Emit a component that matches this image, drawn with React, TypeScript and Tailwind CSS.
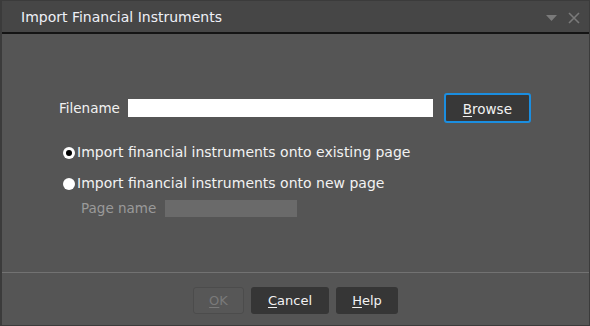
import React from "react";

const font = { fontFamily: '"DejaVu Sans", Verdana, sans-serif' };

function Radio({ checked }: { checked?: boolean }) {
  return (
    <span className="flex h-[12px] w-[12px] items-center justify-center rounded-full bg-white">
      {checked && <span className="h-[6px] w-[6px] rounded-full bg-black" />}
    </span>
  );
}

export default function App() {
  return (
    <div
      className="flex h-[326px] w-[590px] flex-col border border-l-2 border-[#3b3b3b] bg-[#555555] text-[13px]"
      style={font}
    >
      {/* title bar */}
      <div className="flex h-[33px] shrink-0 items-center justify-between border-b-2 border-[#141414] bg-[#464646] pb-[1px] pl-[19px] pr-[9px] pt-[3px]">
        <span className="text-[14px] text-[#eef0f6]">Import Financial Instruments</span>
        <div className="flex items-center gap-[11px]">
          <svg width="11" height="6" viewBox="0 0 11 6">
            <path d="M0 0 L11 0 L5.5 6 Z" fill="#7a7a7a" />
          </svg>
          <svg width="12" height="12" viewBox="0 0 12 12">
            <path d="M1 1 L11 11 M11 1 L1 11" stroke="#7a7a7a" strokeWidth="1.6" />
          </svg>
        </div>
      </div>

      {/* body */}
      <div className="flex flex-1 flex-col pl-[57px] pt-[59px]">
        <div className="flex items-center">
          <span className="text-[13.5px] text-[#f2f2f2]">Filename</span>
          <div className="ml-[8px] h-[18px] w-[305px] bg-white" />
          <button className="ml-[11px] h-[30px] w-[87px] rounded-[3px] border-2 border-[#1b8ee0] bg-[#383838] pt-[2px] text-[13.5px] text-[#f2f2f2]">
            <span className="underline underline-offset-2">B</span>rowse
          </button>
        </div>

        <div className="mt-[19px] flex items-center gap-[2px] pl-[4px] text-[14px]">
          <Radio checked />
          <span className="text-[#f2f2f2]">Import financial instruments onto existing page</span>
        </div>
        <div className="mt-[10px] flex items-center gap-[2px] pl-[4px] text-[14px]">
          <Radio />
          <span className="text-[#f2f2f2]">Import financial instruments onto new page</span>
        </div>
        <div className="mt-[4px] flex items-center pl-[22px]">
          <span className="text-[13.5px] text-[#9a9a9a]">Page name</span>
          <div className="ml-[9px] h-[17px] w-[132px] bg-[#6a6a6a]" />
        </div>
      </div>

      {/* footer */}
      <div className="flex h-[53px] shrink-0 items-center justify-center gap-[7px] border-t border-[#727272] pt-[2px]">
        <button className="h-[27px] w-[51px] rounded-[3px] border border-[#4c4c4c] bg-[#575757] pt-[2px] text-[#7a7a7a]">
          <span className="underline underline-offset-2">O</span>K
        </button>
        <button className="h-[27px] w-[78px] rounded-[3px] bg-[#363636] pt-[2px] text-[#f2f2f2]">
          <span className="underline underline-offset-2">C</span>ancel
        </button>
        <button className="h-[27px] w-[62px] rounded-[3px] bg-[#363636] pt-[2px] text-[#f2f2f2]">
          <span className="underline underline-offset-2">H</span>elp
        </button>
      </div>
    </div>
  );
}
